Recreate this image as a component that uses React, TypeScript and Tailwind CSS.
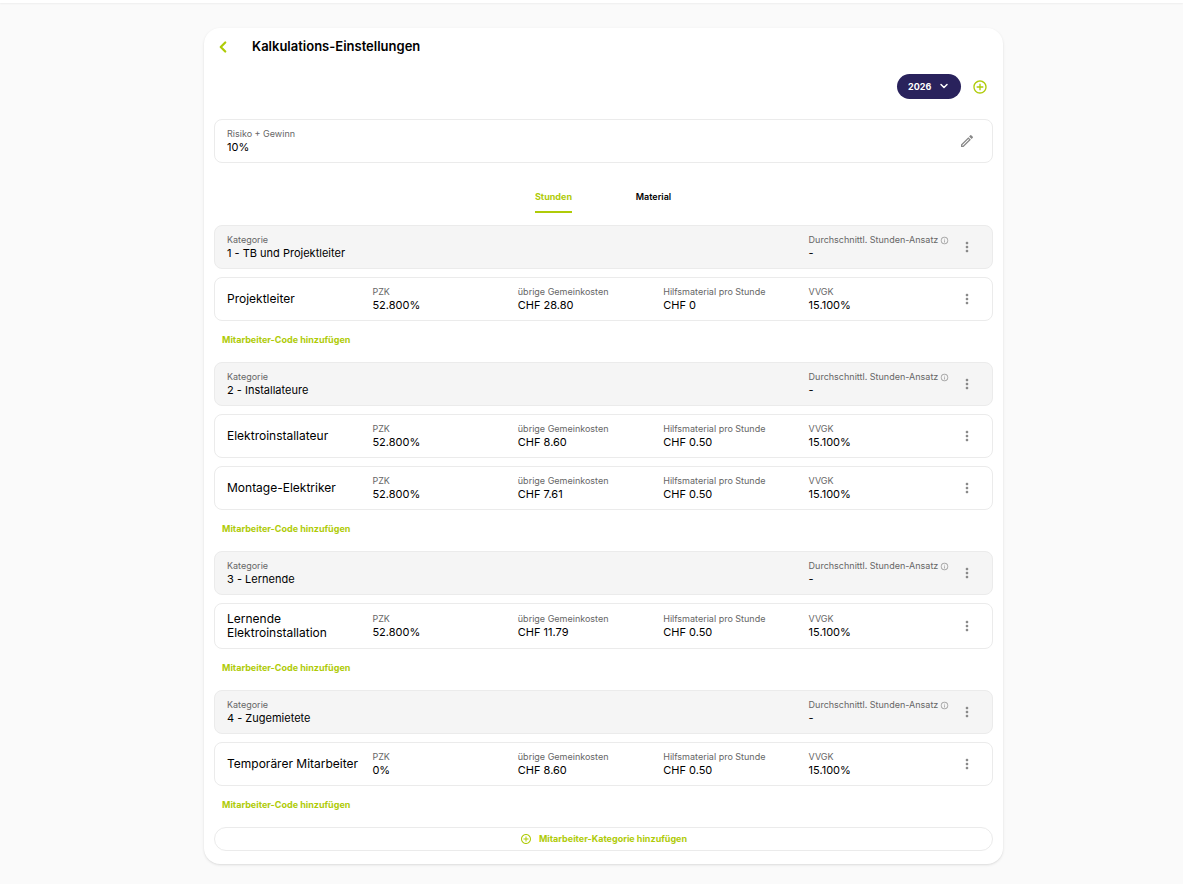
import { ChevronDown, ChevronLeft } from "lucide-react";
import {
  MdAddCircleOutline,
  MdInfoOutline,
  MdMoreVert,
  MdOutlineModeEdit,
} from "react-icons/md";

type Employee = {
  name: string;
  pzk: string;
  overhead: string;
  material: string;
  vvgk: string;
};

type Category = {
  title: string;
  employees: Employee[];
};

const categories: Category[] = [
  {
    title: "1 - TB und Projektleiter",
    employees: [
      { name: "Projektleiter", pzk: "52.800%", overhead: "CHF 28.80", material: "CHF 0", vvgk: "15.100%" },
    ],
  },
  {
    title: "2 - Installateure",
    employees: [
      { name: "Elektroinstallateur", pzk: "52.800%", overhead: "CHF 8.60", material: "CHF 0.50", vvgk: "15.100%" },
      { name: "Montage-Elektriker", pzk: "52.800%", overhead: "CHF 7.61", material: "CHF 0.50", vvgk: "15.100%" },
    ],
  },
  {
    title: "3 - Lernende",
    employees: [
      { name: "Lernende Elektroinstallation", pzk: "52.800%", overhead: "CHF 11.79", material: "CHF 0.50", vvgk: "15.100%" },
    ],
  },
  {
    title: "4 - Zugemietete",
    employees: [
      { name: "Temporärer Mitarbeiter", pzk: "0%", overhead: "CHF 8.60", material: "CHF 0.50", vvgk: "15.100%" },
    ],
  },
];

const Field = ({ label, value, info }: { label: string; value: string; info?: boolean }) => (
  <div className="whitespace-nowrap">
    <div className="flex items-center gap-[2px] text-[9px] leading-3 text-[#666]">
      {label}
      {info && <MdInfoOutline className="size-[9px] text-[#999]" />}
    </div>
    <div className="text-[11px] leading-[14px] text-black">{value}</div>
  </div>
);

const MenuButton = () => (
  <button type="button" aria-label="Menü" className="flex w-[26px] justify-center text-[#888]">
    <MdMoreVert className="size-4" />
  </button>
);

const CategoryRow = ({ title }: { title: string }) => (
  <div className="flex min-h-11 items-center rounded-lg border border-[#ebebeb] bg-[#f5f5f5] px-3">
    <div className="grid flex-1 grid-cols-5">
      <div className="col-span-4">
        <Field label="Kategorie" value={title} />
      </div>
      <Field label="Durchschnittl. Stunden-Ansatz" value="-" info />
    </div>
    <MenuButton />
  </div>
);

const EmployeeRow = ({ employee }: { employee: Employee }) => (
  <div className="flex min-h-11 items-center rounded-lg border border-[#ebebeb] px-3 py-2">
    <div className="grid flex-1 grid-cols-5 items-center">
      <div className="pr-2 text-[12px] leading-[14px]">{employee.name}</div>
      <Field label="PZK" value={employee.pzk} />
      <Field label="übrige Gemeinkosten" value={employee.overhead} />
      <Field label="Hilfsmaterial pro Stunde" value={employee.material} />
      <Field label="VVGK" value={employee.vvgk} />
    </div>
    <MenuButton />
  </div>
);

const App = () => {
  return (
    <div className="min-h-screen bg-[#fafafa] font-[Inter,sans-serif] text-black">
      <div className="h-[3px] bg-white shadow-xs" />
      <div className="pt-[25px] pl-6">
        <main className="mx-auto max-w-[799px] rounded-2xl bg-white px-[10px] pb-[13px] shadow-sm">
          <header className="flex h-[37px] items-center">
            <a href="#" aria-label="Zurück" className="flex w-[38px] text-[#afcb08]">
              <ChevronLeft className="size-[18px]" strokeWidth={3} />
            </a>
            <h1 className="text-[13px] font-semibold">Kalkulations-Einstellungen</h1>
          </header>

          <div className="flex items-center justify-end gap-[11px] pt-[9px] pr-[5px]">
            <div className="relative">
              <select
                aria-label="Jahr"
                className="block h-[25px] w-16 appearance-none rounded-full bg-[#29225c] pl-[11px] text-[9px] font-bold text-white"
              >
                <option>2026</option>
              </select>
              <ChevronDown
                className="pointer-events-none absolute top-[6px] right-[11px] size-3 text-white"
                strokeWidth={3}
              />
            </div>
            <button type="button" aria-label="Jahr hinzufügen" className="text-[#afcb08]">
              <MdAddCircleOutline className="size-4" />
            </button>
          </div>

          <div className="mt-5 flex min-h-11 items-center rounded-lg border border-[#ebebeb] px-3">
            <div className="flex-1">
              <Field label="Risiko + Gewinn" value="10%" />
            </div>
            <button type="button" aria-label="Bearbeiten" className="flex w-[26px] justify-center text-[#888]">
              <MdOutlineModeEdit className="size-4" />
            </button>
          </div>

          <div role="tablist" className="flex justify-center pt-[18px] pb-3 text-[9px] font-semibold">
            <div className="flex w-[100px] justify-center">
              <button
                type="button"
                role="tab"
                aria-selected="true"
                className="h-8 border-b-2 border-[#afcb08] pt-0.5 font-bold text-[#afcb08]"
              >
                Stunden
              </button>
            </div>
            <div className="flex w-[100px] justify-center">
              <button
                type="button"
                role="tab"
                aria-selected="false"
                className="h-8 border-b-2 border-transparent pt-0.5"
              >
                Material
              </button>
            </div>
          </div>

          {categories.map((category) => (
            <section key={category.title} className="flex flex-col gap-2">
              <CategoryRow title={category.title} />
              {category.employees.map((employee) => (
                <EmployeeRow key={employee.name} employee={employee} />
              ))}
              <button
                type="button"
                className="mb-3 self-start px-2 text-[9px] leading-[21px] font-bold text-[#afcb08]"
              >
                Mitarbeiter-Code hinzufügen
              </button>
            </section>
          ))}

          <button
            type="button"
            className="flex h-6 w-full items-center justify-center gap-[7px] rounded-full border border-[#ebebeb] text-[9px] font-bold text-[#afcb08]"
          >
            <MdAddCircleOutline className="size-3" />
            Mitarbeiter-Kategorie hinzufügen
          </button>
        </main>
      </div>
    </div>
  );
};

export default App;
